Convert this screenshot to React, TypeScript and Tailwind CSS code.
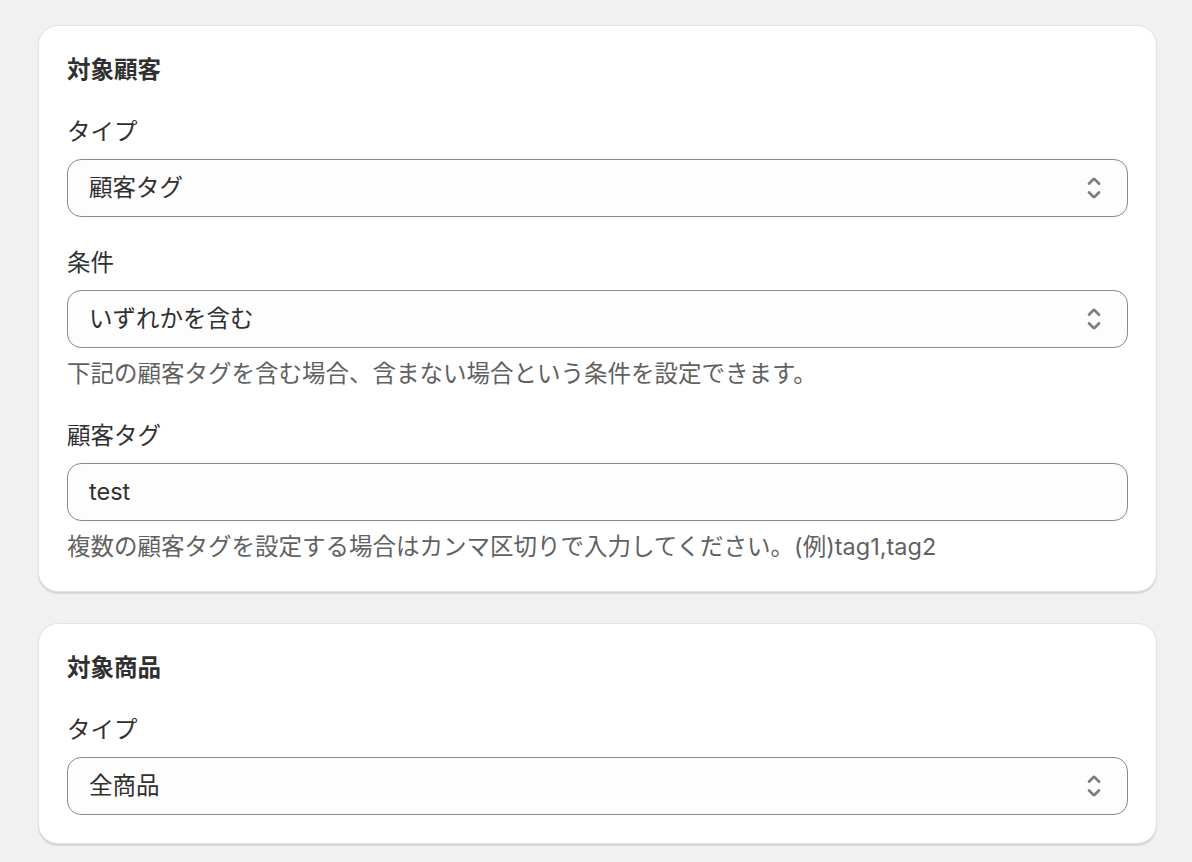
import React from "react";

const FONT = { fontFamily: 'Inter, "Noto Sans CJK JP", sans-serif' };

function SelectIcon() {
  return (
    <svg viewBox="0 0 20 20" width="34" height="34" fill="#7d7d7d">
      <path d="M10.884 4.323a1.25 1.25 0 0 0-1.768 0l-2.646 2.647a.75.75 0 0 0 1.06 1.06l2.47-2.47 2.47 2.47a.75.75 0 1 0 1.06-1.06l-2.646-2.647Z" />
      <path d="m13.53 13.03-2.646 2.647a1.25 1.25 0 0 1-1.768 0l-2.646-2.647a.75.75 0 0 1 1.06-1.06l2.47 2.47 2.47-2.47a.75.75 0 0 1 1.06 1.06Z" />
    </svg>
  );
}

function Label({ children }: { children: React.ReactNode }) {
  return <div className="text-[23.5px] leading-[32px] text-[#303030] mb-[11px]">{children}</div>;
}

function Help({ children }: { children: React.ReactNode }) {
  return <div className="text-[23.5px] leading-[32px] text-[#616161] mt-[10px]">{children}</div>;
}

function Select({ value }: { value: string }) {
  return (
    <div className="h-[58px] rounded-[14px] border border-[#8a8a8a] bg-[#fdfdfd] flex items-center justify-between pl-[21px] pr-[16px]">
      <span className="text-[23.5px] text-[#303030]">{value}</span>
      <SelectIcon />
    </div>
  );
}

function Input({ value }: { value: string }) {
  return (
    <div className="h-[58px] rounded-[14px] border border-[#8a8a8a] bg-[#fdfdfd] flex items-center pl-[21px]">
      <span className="text-[23.5px] text-[#303030]">{value}</span>
    </div>
  );
}

function Card({ children }: { children: React.ReactNode }) {
  return (
    <div className="bg-white rounded-[20px] border border-[#e3e3e3] shadow-[0_2px_0_0_rgba(0,0,0,0.08),0_1px_2px_rgba(0,0,0,0.06)] p-[28px] flex flex-col gap-[30px]">
      {children}
    </div>
  );
}

function Title({ children }: { children: React.ReactNode }) {
  return <div className="text-[23.5px] leading-[32px] font-bold text-[#303030]">{children}</div>;
}

export default function App() {
  return (
    <div className="min-h-[862px] bg-[#f1f1f1] pt-[25px] pl-[38px] pr-[35px]" style={FONT}>
      <div className="flex flex-col gap-[31px]">
        <Card>
          <Title>対象顧客</Title>
          <div>
            <Label>タイプ</Label>
            <Select value="顧客タグ" />
          </div>
          <div>
            <Label>条件</Label>
            <Select value="いずれかを含む" />
            <Help>下記の顧客タグを含む場合、含まない場合という条件を設定できます。</Help>
          </div>
          <div>
            <Label>顧客タグ</Label>
            <Input value="test" />
            <Help>複数の顧客タグを設定する場合はカンマ区切りで入力してください。(例)tag1,tag2</Help>
          </div>
        </Card>
        <Card>
          <Title>対象商品</Title>
          <div>
            <Label>タイプ</Label>
            <Select value="全商品" />
          </div>
        </Card>
      </div>
    </div>
  );
}
